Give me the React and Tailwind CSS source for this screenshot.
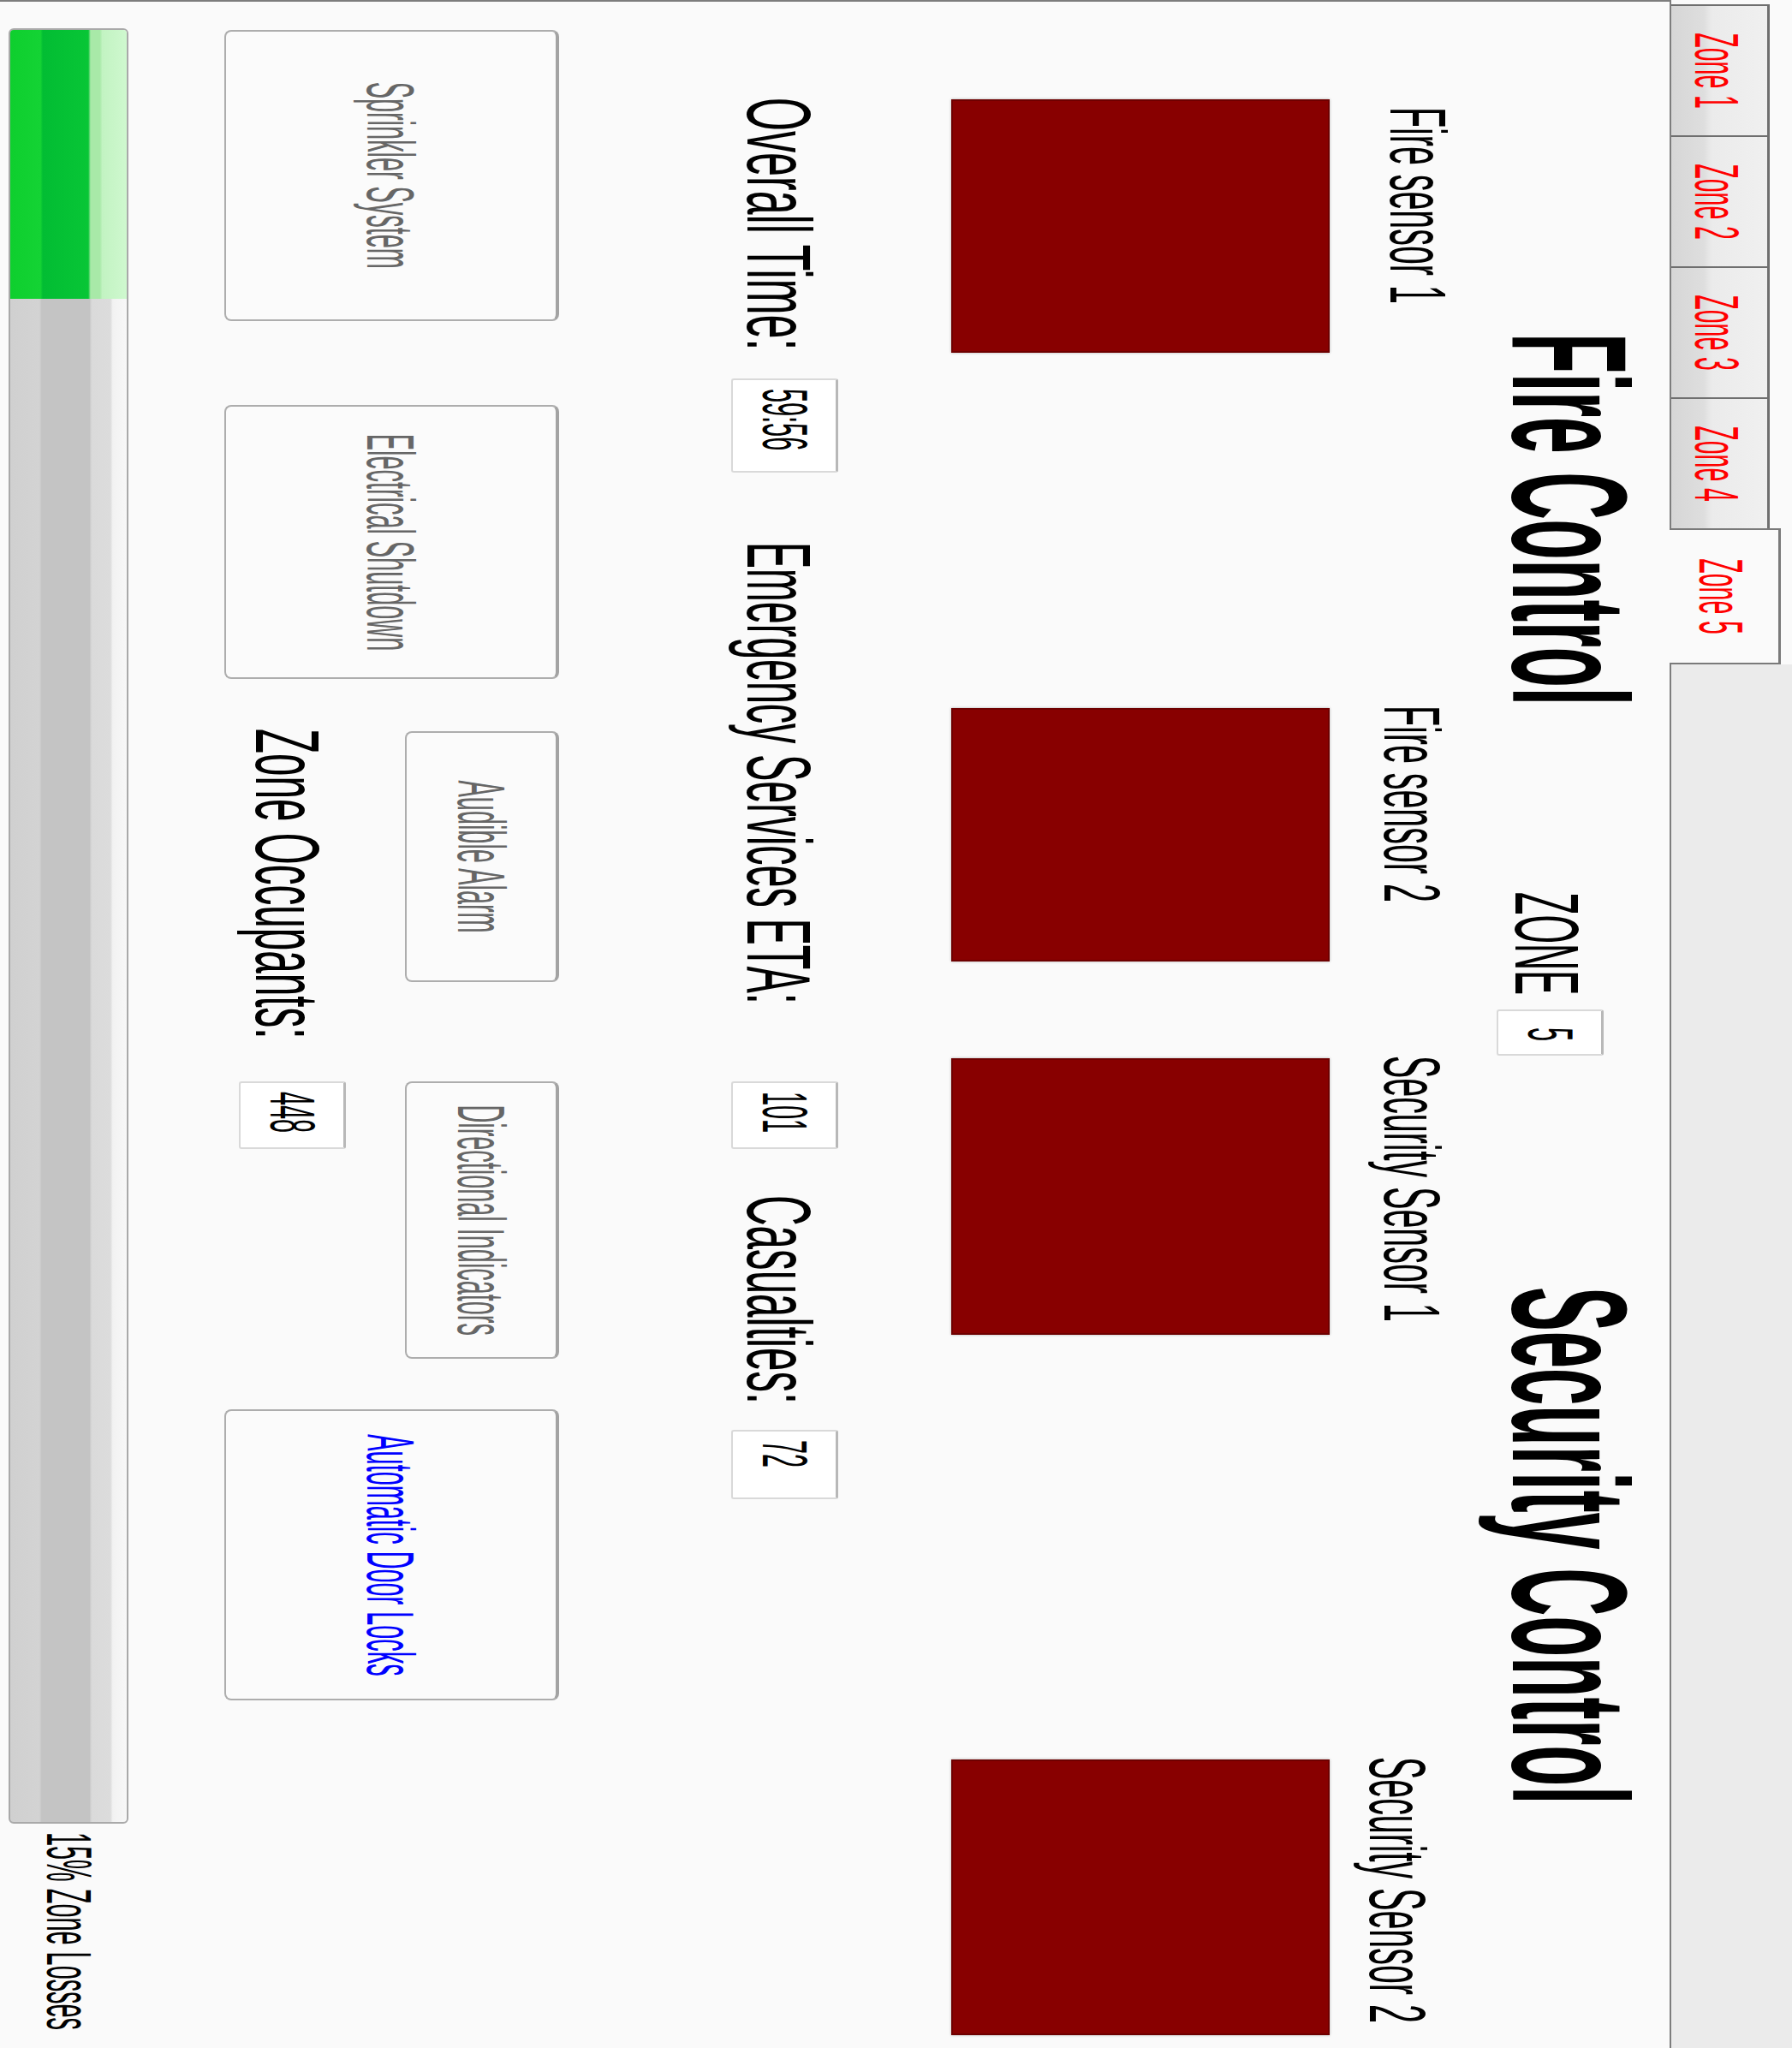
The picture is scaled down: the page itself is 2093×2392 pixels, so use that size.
import React from 'react';

function Sq({ k, children }) {
  return <span className={`inline-block whitespace-nowrap leading-none ${k}`}>{children}</span>;
}

function Field({ cls, pad = 'pl-[10px]', children }) {
  return (
    <div className={`${cls} ${pad} h-[125px] shrink-0 flex items-center bg-white border-2 border-[#d9d9d9] border-t-[3px] border-t-[#b8b8b8] rounded-[3px]`}>
      <Sq k="origin-left scale-x-[0.39] text-[74px] text-black">{children}</Sq>
    </div>
  );
}

function Btn({ cls, color = 'text-[#666666]', children }) {
  return (
    <div className={`${cls} shrink-0 flex items-center justify-center bg-[#fbfbfb] border-2 border-[#adadad] border-t-[4px] border-t-[#a3a3a3] rounded-[8px]`}>
      <Sq k={`scale-x-[0.37] text-[78px] ${color}`}>{children}</Sq>
    </div>
  );
}

const TABS = ['Zone 1', 'Zone 2', 'Zone 3', 'Zone 4'];

const SENSORS = [
  { col: 'ml-[114px] w-[296px]', lab: 'mt-[3px] ml-[9px]', box: 'mt-[57px]', name: 'Fire sensor 1' },
  { col: 'ml-[415px] w-[296px]', lab: 'mt-[10px] -ml-[3px]', box: 'mt-[50px]', name: 'Fire sensor 2' },
  { col: 'ml-[113px] w-[323px]', lab: 'mt-[10px] -ml-[3px]', box: 'mt-[50px]', name: 'Security Sensor 1' },
  { col: 'ml-[496px] w-[322px]', lab: 'mt-[27px] -ml-[3px]', box: 'mt-[33px]', name: 'Security Sensor 2' },
];

export default function App() {
  const zone = 5;
  const losses = 15;

  return (
    <div className="w-[2093px] h-[2392px] overflow-hidden bg-[#fafafa] font-['Liberation_Sans',Arial,sans-serif]">
      {/* the form is laid out landscape and turned a quarter clockwise */}
      <div className="w-[2392px] h-[2093px] origin-top-left translate-x-[2093px] rotate-90 flex flex-col">
        {/* Tab strip */}
        <div className="h-[141px] flex shrink-0">
          <div className="w-[5px] shrink-0" />
          {TABS.map(t => (
            <div
              key={t}
              className="w-[153px] h-[115px] self-end shrink-0 flex justify-center pt-[22px] border-2 border-r-0 border-b-0 border-t-[3px] border-[#6f6f6f] bg-[linear-gradient(to_bottom,#f0f0f0,#ebebeb_58%,#dedede_66%,#d6d6d6)]"
            >
              <Sq k="scale-x-[0.39] text-[73px] text-[#ff0000]">{t}</Sq>
            </div>
          ))}
          <div className="w-[159px] h-[130px] self-end -mb-[2px] relative z-10 shrink-0 flex justify-center pt-[30px] bg-[#fafafa] border-2 border-b-0 border-t-[3px] border-[#7a7a7a]">
            <Sq k="scale-x-[0.39] text-[73px] text-[#ff0000]">Zone {zone}</Sq>
          </div>
          <div className="flex-1 bg-[#ebebeb]" />
        </div>

        {/* Panel */}
        <div className="flex-1 flex flex-col bg-[#fafafa] border-t-2 border-l-2 border-[#7d7d7d]">
          {/* Headings */}
          <div className="h-[245px] flex items-start shrink-0">
            <div className="ml-[387px] mt-[21px] w-[435px] shrink-0">
              <Sq k="origin-left scale-x-[0.402] text-[191px] font-bold text-black">Fire Control</Sq>
            </div>
            <div className="ml-[218px] mt-[90px] w-[120px] shrink-0">
              <Sq k="origin-left scale-x-[0.408] text-[106px] text-black">ZONE</Sq>
            </div>
            <Field cls="ml-[17px] mt-[77px] w-[54px]" pad="pl-[19px]">{zone}</Field>
            <div className="ml-[270px] mt-[21px] w-[599px] shrink-0">
              <Sq k="origin-left scale-x-[0.407] text-[191px] font-bold text-black">Security Control</Sq>
            </div>
          </div>

          {/* Sensors */}
          <div className="h-[594px] flex items-start shrink-0">
            {SENSORS.map(s => (
              <div key={s.name} className={`${s.col} shrink-0 flex flex-col`}>
                <div className={s.lab}>
                  <Sq k="origin-left scale-x-[0.428] text-[92px] text-black">{s.name}</Sq>
                </div>
                <div className={`${s.box} h-[442px] bg-[#880000] border-2 border-[#6e0000] shadow-[0_0_3px_#b0b0b0]`} />
              </div>
            ))}
          </div>

          {/* Readouts */}
          <div className="mt-[132px] h-[125px] flex items-start shrink-0">
            <div className="ml-[112px] mt-[16px] w-[298px] shrink-0">
              <Sq k="origin-left scale-x-[0.473] text-[106px] text-black">Overall Time:</Sq>
            </div>
            <Field cls="ml-[30px] w-[110px]">59:56</Field>
            <div className="ml-[81px] mt-[16px] w-[557px] shrink-0">
              <Sq k="origin-left scale-x-[0.439] text-[106px] text-black">Emergency Services ETA:</Sq>
            </div>
            <Field cls="ml-[73px] w-[79px]">101</Field>
            <div className="ml-[54px] mt-[16px] w-[244px] shrink-0">
              <Sq k="origin-left scale-x-[0.465] text-[106px] text-black">Casualties:</Sq>
            </div>
            <Field cls="ml-[30px] w-[81px]">72</Field>
          </div>

          {/* Controls */}
          <div className="mt-[201px] h-[391px] flex items-start shrink-0">
            <Btn cls="ml-[33px] w-[340px] h-[391px]">Sprinkler System</Btn>
            <Btn cls="ml-[98px] w-[320px] h-[391px]">Electrical Shutdown</Btn>
            <div className="ml-[54px] w-[740px] shrink-0 flex flex-col">
              <div className="flex">
                <Btn cls="ml-[7px] w-[293px] h-[180px]">Audible Alarm</Btn>
                <Btn cls="ml-[116px] w-[324px] h-[180px]">Directional Indicators</Btn>
              </div>
              <div className="mt-[69px] flex items-start">
                <div className="ml-[4px] mt-[15px] w-[362px] shrink-0">
                  <Sq k="origin-left scale-x-[0.449] text-[106px] text-black">Zone Occupants:</Sq>
                </div>
                <Field cls="ml-[50px] w-[79px]">448</Field>
              </div>
            </div>
            <Btn cls="ml-[59px] w-[340px] h-[391px]" color="text-[#0000ff]">Automatic Door Locks</Btn>
          </div>

          {/* Losses bar */}
          <div className="mt-[112px] h-[140px] flex items-start shrink-0">
            <div className="ml-[31px] w-[2097px] h-[140px] shrink-0 flex overflow-hidden rounded-[6px] border-2 border-[#a9a9a9] bg-[linear-gradient(to_bottom,#f7f7f7_0%,#f2f2f2_12%,#dcdcdc_14%,#dadada_30%,#c4c4c4_32%,#c4c4c4_73%,#d3d3d3_75%,#d0d0d0_100%)]">
              <div
                className="h-full bg-[linear-gradient(to_bottom,#cff8cf_0%,#c2f3c2_21%,#a8e9a8_23%,#a8e9a8_31%,#08c636_33%,#02bd33_72%,#14d334_74%,#0ecf2e_100%)]"
                style={{ width: `${losses}%` }}
              />
            </div>
            <div className="ml-[10px] mt-[33px] w-[230px] shrink-0">
              <Sq k="origin-left scale-x-[0.39] text-[74px] text-black">{losses}% Zone Losses</Sq>
            </div>
          </div>
        </div>
      </div>
    </div>
  );
}
